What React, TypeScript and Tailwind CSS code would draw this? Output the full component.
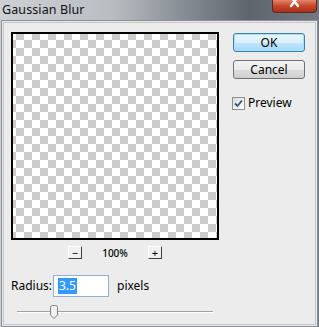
import React from "react";

const font = { fontFamily: '"Noto Sans", "DejaVu Sans", sans-serif' };

function SmallBtn({ label }: { label: string }) {
  return (
    <div className="w-[14px] h-[13px] bg-[#f0f0f0] border border-t-[#ffffff] border-l-[#ffffff] border-r-[#404040] border-b-[#404040] flex items-center justify-center text-[11px] leading-none text-black">
      {label}
    </div>
  );
}

export default function App() {
  return (
    <div
      className="w-[319px] h-[327px] overflow-hidden relative bg-[linear-gradient(90deg,#cdd1d5_0%,#b9bec3_35%,#858c93_58%,#5e656c_78%,#727980_100%)]"
      style={font}
    >
      {/* title bar */}
      <div className="h-[20px] flex items-start pl-[2px] pt-[2px]">
        <span className="text-[12.5px] text-[#111] leading-[16px] tracking-[0.1px]">Gaussian Blur</span>
      </div>
      {/* close button */}
      <div className="absolute top-0 left-[272px] w-[45px] h-[13px] rounded-b-[4px] border border-t-0 border-[#5a2a20] bg-[linear-gradient(180deg,#e4876c_0%,#c9452a_50%,#a8301a_100%)] flex items-start justify-center">
        <svg width="12" height="8" viewBox="0 0 12 8">
          <path d="M2 -3 L9 6 M9 -3 L2 6" stroke="#ffffff" strokeWidth="2.4" strokeLinecap="round" />
        </svg>
      </div>
      {/* body */}
      <div className="mx-[1px] h-[307px] border border-[#8a8f95] bg-[#e9e9e9] p-[1px]">
        <div className="h-full bg-[#ececec] border border-[#c7c7c7] flex">
          {/* left column */}
          <div className="flex flex-col pl-[7px] pt-[9px]">
            <div className="w-[208px] h-[208px] border-2 border-black bg-[conic-gradient(#ffffff_25%,#cccccc_0_50%,#ffffff_0_75%,#cccccc_0)] bg-[length:16px_16px] bg-[position:-13px_-34px]" />
            <div className="flex items-center h-[13px] mt-[6px] pl-[57px]">
              <SmallBtn label="−" />
              <span className="w-[66px] text-center text-[10px] text-black leading-none font-medium">100%</span>
              <SmallBtn label="+" />
            </div>
            <div className="flex items-center mt-[16px] h-[22px]">
              <span className="text-[12px] text-black w-[42px]">Radius:</span>
              <div className="w-[56px] h-[22px] border border-[#8fb1d4] bg-white flex items-center pl-[4px]">
                <span className="bg-[#3399ff] text-white text-[12px] leading-[16px] px-[1px]">3.5</span>
              </div>
              <span className="text-[12px] text-black ml-[8px]">pixels</span>
            </div>
            <div className="relative mt-[8px] h-[14px] ml-[6px] w-[196px]">
              <div className="absolute left-0 right-0 top-[6px] h-[1px] bg-[#a0a0a0]" />
              <div className="absolute left-0 right-0 top-[7px] h-[1px] bg-[#ffffff]" />
              <svg className="absolute left-[32px] top-0" width="10" height="14" viewBox="0 0 10 14">
                <path d="M1.5 2.5 Q1.5 0.5 3.5 0.5 L6.5 0.5 Q8.5 0.5 8.5 2.5 L8.5 10 L5 13.5 L1.5 10 Z" fill="#f0f0f0" stroke="#808080" />
              </svg>
            </div>
          </div>
          {/* right column */}
          <div className="flex flex-col pl-[14px] pt-[10px]">
            <div className="w-[72px] h-[19px] rounded-[3px] border border-[#3c7fb1] shadow-[inset_0_0_0_1px_#a6e0f7] bg-[linear-gradient(180deg,#eaf6fd_0%,#d9f0fc_50%,#bee6fd_51%,#a7d9f5_100%)] flex items-center justify-center text-[12px] text-black">
              OK
            </div>
            <div className="w-[72px] h-[19px] mt-[8px] rounded-[3px] border border-[#707070] bg-[linear-gradient(180deg,#f2f2f2_0%,#ebebeb_50%,#dddddd_51%,#cfcfcf_100%)] flex items-center justify-center text-[12px] text-black">
              Cancel
            </div>
            <div className="flex items-center mt-[15px] -ml-[1px]">
              <div className="w-[13px] h-[13px] border border-[#8e8f8f] bg-[linear-gradient(135deg,#dcdcdc,#ffffff)] flex items-center justify-center">
                <svg width="9" height="9" viewBox="0 0 9 9">
                  <path d="M1 4.5 L3.5 7 L8 1.5" fill="none" stroke="#3a4f82" strokeWidth="1.8" />
                </svg>
              </div>
              <span className="ml-[3px] text-[12px] text-black">Preview</span>
            </div>
          </div>
        </div>
      </div>
    </div>
  );
}
